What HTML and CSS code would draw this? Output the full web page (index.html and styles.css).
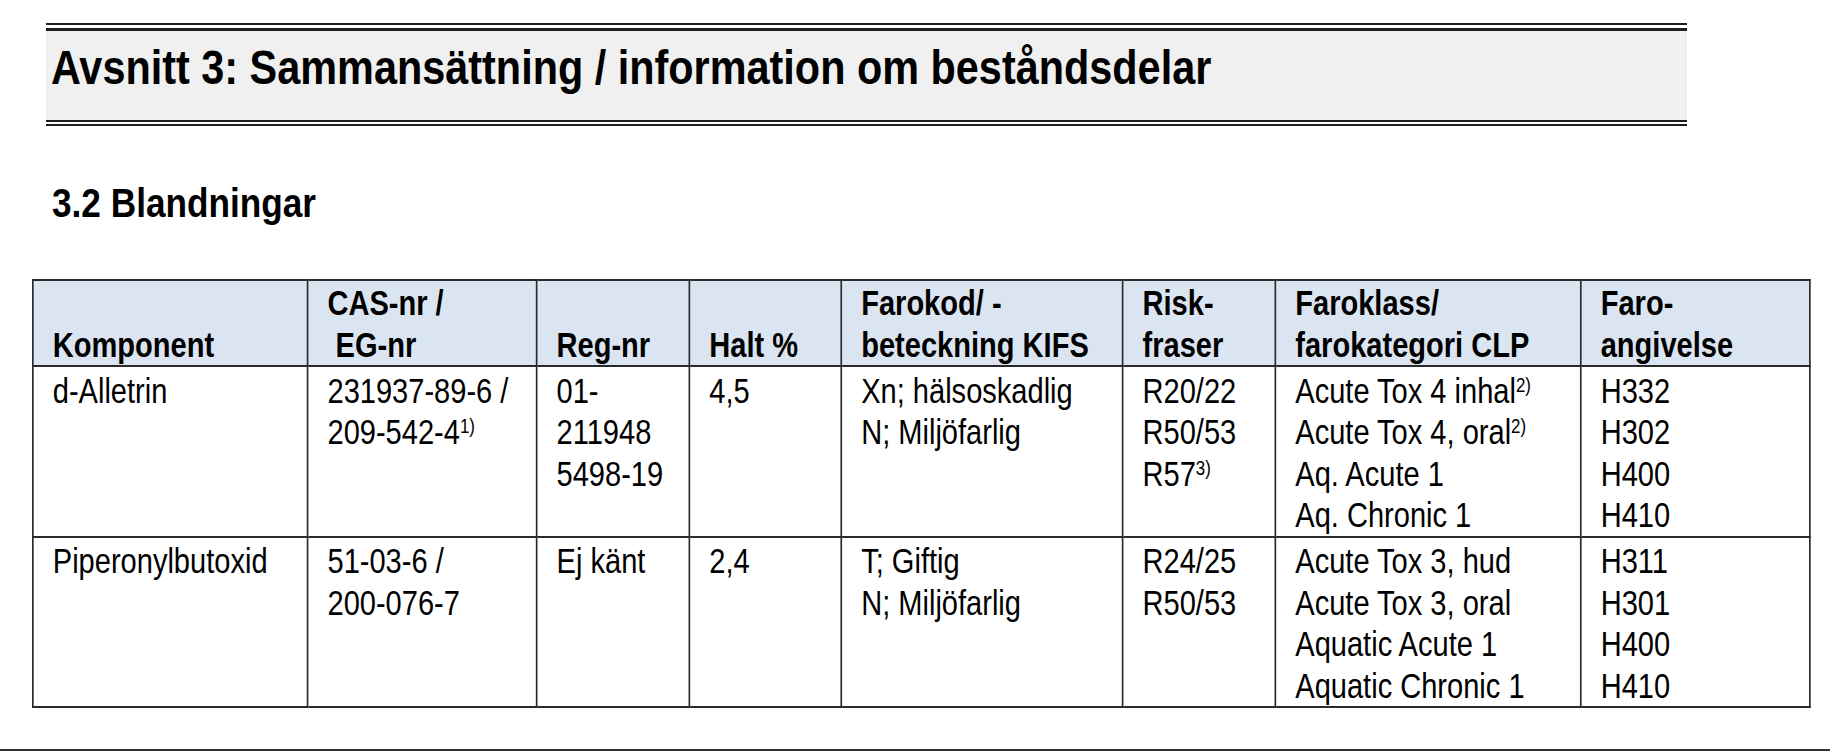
FILE: index.html
```html
<!DOCTYPE html>
<html lang="sv">
<head>
<meta charset="utf-8">
<title>Avsnitt 3</title>
<link rel="stylesheet" href="styles.css">
</head>
<body>
<div class="page">
  <div class="section-frame">
    <div class="section-box">
      <h1 class="section-title"><span class="cond-title">Avsnitt 3: Sammansättning / information om beståndsdelar</span></h1>
    </div>
  </div>

  <h2 class="sub-title"><span class="cond-sub">3.2 Blandningar</span></h2>

  <table class="comp-table">
    <colgroup>
      <col class="c1"><col class="c2"><col class="c3"><col class="c4">
      <col class="c5"><col class="c6"><col class="c7"><col class="c8">
    </colgroup>
    <thead>
      <tr>
        <th>Komponent</th>
        <th>CAS-nr /<br>&nbsp;EG-nr</th>
        <th>Reg-nr</th>
        <th>Halt %</th>
        <th>Farokod/ -<br>beteckning KIFS</th>
        <th>Risk-<br>fraser</th>
        <th>Faroklass/<br>farokategori CLP</th>
        <th>Faro-<br>angivelse</th>
      </tr>
    </thead>
    <tbody>
      <tr>
        <td>d-Alletrin</td>
        <td>231937-89-6 /<br>209-542-4<span class="fn">1)</span></td>
        <td>01-<br>211948<br>5498-19</td>
        <td>4,5</td>
        <td>Xn; hälsoskadlig<br>N; Miljöfarlig</td>
        <td>R20/22<br>R50/53<br>R57<span class="fn">3)</span></td>
        <td>Acute Tox 4 inhal<span class="fn">2)</span><br>Acute Tox 4, oral<span class="fn">2)</span><br>Aq. Acute 1<br>Aq. Chronic 1</td>
        <td>H332<br>H302<br>H400<br>H410</td>
      </tr>
      <tr>
        <td>Piperonylbutoxid</td>
        <td>51-03-6 /<br>200-076-7</td>
        <td>Ej känt</td>
        <td>2,4</td>
        <td>T; Giftig<br>N; Miljöfarlig</td>
        <td>R24/25<br>R50/53</td>
        <td>Acute Tox 3, hud<br>Acute Tox 3, oral<br>Aquatic Acute 1<br>Aquatic Chronic 1</td>
        <td>H311<br>H301<br>H400<br>H410</td>
      </tr>
    </tbody>
  </table>

  <div class="page-rule"></div>
</div>
</body>
</html>
```

FILE: styles.css
```css
html, body {
  margin: 0;
  padding: 0;
  background: #ffffff;
}

body {
  font-family: "Liberation Sans", Arial, sans-serif;
  color: #000;
}

.page {
  width: 1830px;
  height: 754px;
  overflow: hidden;
  padding-top: 23px;
  box-sizing: border-box;
}

/* Title block with double rules */
.section-frame {
  margin-left: 46px;
  width: 1641px;
  border-top: 2px solid #1e1e1e;
  border-bottom: 2px solid #1e1e1e;
  padding: 3px 0 2px;
}

.section-box {
  background: #f0f0f0;
  border-top: 3px solid #1e1e1e;
  border-bottom: 2px solid #1e1e1e;
  padding: 7.5px 5px 24.5px;
}

.section-title {
  margin: 0;
  font-size: 49px;
  font-weight: bold;
  line-height: 57px;
  white-space: nowrap;
}

.cond-title {
  display: inline-block;
  transform: scaleX(0.845);
  transform-origin: 0 0;
}

.sub-title {
  margin: 53.5px 0 0 52px;
  font-size: 40px;
  font-weight: bold;
  line-height: 46px;
  white-space: nowrap;
}

.cond-sub {
  display: inline-block;
  transform: scaleX(0.88);
  transform-origin: 0 0;
}

/* Table: laid out wide, then condensed horizontally to mimic Arial Narrow */
.comp-table {
  margin: 53.5px 0 0 32px;
  width: 2141px;
  table-layout: fixed;
  border-collapse: collapse;
  font-size: 35px;
  line-height: 41.5px;
  transform: scaleX(0.83);
  transform-origin: 0 0;
}

.c1 { width: 331px; }
.c2 { width: 276px; }
.c3 { width: 184px; }
.c4 { width: 183px; }
.c5 { width: 339px; }
.c6 { width: 184px; }
.c7 { width: 368px; }
.c8 { width: 276px; }

.comp-table th,
.comp-table td {
  border: 2px solid #2a2a2a;
  padding: 2.5px 4px 0 23px;
  text-align: left;
  white-space: nowrap;
}

.comp-table th {
  background: #dbe5f1;
  font-weight: bold;
  vertical-align: bottom;
  padding-top: 1px;
}

.comp-table td {
  vertical-align: top;
  font-weight: normal;
}

.fn {
  font-size: 0.58em;
  line-height: 0;
  vertical-align: 0.55em;
}

.page-rule {
  margin-top: 41px;
  height: 2px;
  background: #333;
}
```
